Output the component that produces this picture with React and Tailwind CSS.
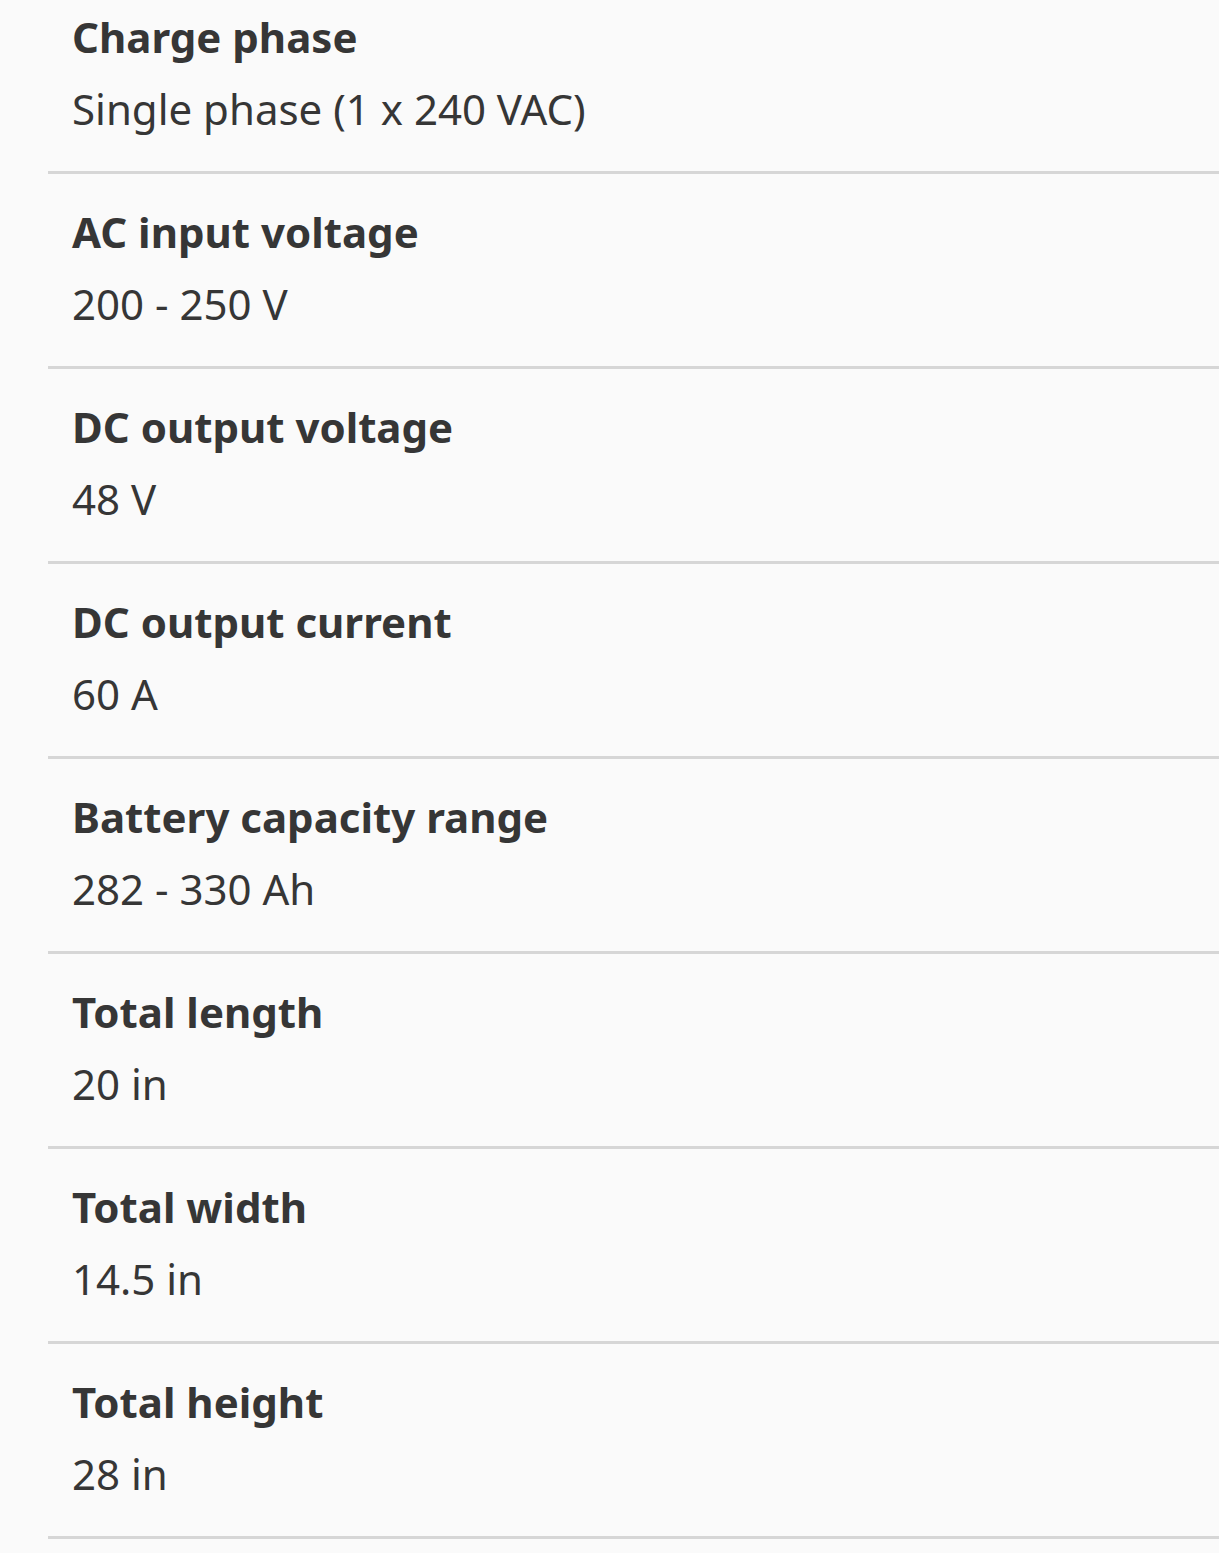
export default function App() {
  const rows = [
    ["Charge phase", "Single phase (1 x 240 VAC)"],
    ["AC input voltage", "200 - 250 V"],
    ["DC output voltage", "48 V"],
    ["DC output current", "60 A"],
    ["Battery capacity range", "282 - 330 Ah"],
    ["Total length", "20 in"],
    ["Total width", "14.5 in"],
    ["Total height", "28 in"],
  ];
  return (
    <div className="min-h-[1553px] w-[1219px] bg-[#fafafa] text-[#363636]" style={{ fontFamily: '"Noto Sans", "Open Sans", sans-serif' }}>
      <div className="ml-[48px]">
        {rows.map(([t, v], i) => (
          <div key={t} className={`${i === 0 ? "pt-[1px]" : "pt-[22px]"} pb-[26px] border-b-[3px] border-[#d6d6d6]`}>
            <div className="pl-[24px] text-[42px] leading-[72px] font-bold">{t}</div>
            <div className="pl-[24px] text-[42px] leading-[72px]">{v}</div>
          </div>
        ))}
      </div>
    </div>
  );
}
